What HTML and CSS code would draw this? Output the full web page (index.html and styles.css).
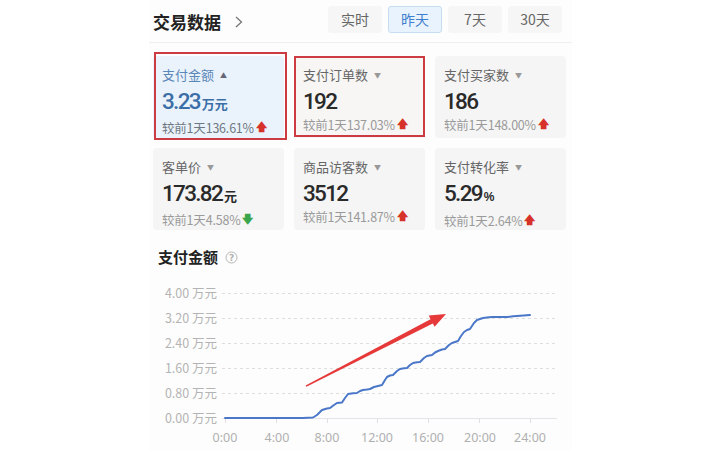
FILE: index.html
```html
<!DOCTYPE html>
<html lang="zh">
<head>
<meta charset="utf-8">
<link rel="stylesheet" href="styles.css">
</head>
<body>
<div class="panel">
  <div class="header">
    <div class="title">交易数据
      <svg class="chev" width="10" height="14" viewBox="0 0 10 14"><polyline points="2,2 7.5,7 2,12" fill="none" stroke="#777" stroke-width="1.3"/></svg>
    </div>
    <div class="tabs">
      <span class="tab">实时</span>
      <span class="tab active">昨天</span>
      <span class="tab">7天</span>
      <span class="tab">30天</span>
    </div>
  </div>

  <div class="grid">
    <div class="card sel">
      <div class="label">支付金额 <span class="caret">▲</span></div>
      <div class="value"><span class="num">3.23</span><span class="unit">万元</span></div>
      <div class="sub">较前1天136.61%<span class="up">🡅</span></div>
      <div class="mark mark1"></div>
    </div>
    <div class="card warm">
      <div class="label">支付订单数 <span class="caret">▼</span></div>
      <div class="value"><span class="num">192</span></div>
      <div class="sub">较前1天137.03%<span class="up">🡅</span></div>
      <div class="mark mark2"></div>
    </div>
    <div class="card">
      <div class="label">支付买家数 <span class="caret">▼</span></div>
      <div class="value"><span class="num">186</span></div>
      <div class="sub">较前1天148.00%<span class="up">🡅</span></div>
    </div>
    <div class="card">
      <div class="label">客单价 <span class="caret">▼</span></div>
      <div class="value"><span class="num">173.82</span><span class="unit">元</span></div>
      <div class="sub">较前1天4.58%<span class="down">🡇</span></div>
    </div>
    <div class="card">
      <div class="label">商品访客数 <span class="caret">▼</span></div>
      <div class="value"><span class="num">3512</span></div>
      <div class="sub">较前1天141.87%<span class="up">🡅</span></div>
    </div>
    <div class="card">
      <div class="label">支付转化率 <span class="caret">▼</span></div>
      <div class="value"><span class="num">5.29</span><span class="unit pct">%</span></div>
      <div class="sub">较前1天2.64%<span class="up">🡅</span></div>
    </div>
  </div>

  <div class="chart-title">支付金额
    <svg class="help" width="13" height="13" viewBox="0 0 13 13"><circle cx="6.5" cy="6.5" r="5.5" fill="none" stroke="#b5b5b5" stroke-width="1"/><text x="6.5" y="9.6" text-anchor="middle" class="qm">?</text></svg>
  </div>

  <svg class="chart" width="423" height="175" viewBox="0 0 423 175">
    <g class="grid-lines" stroke="#dedede" stroke-width="1" stroke-dasharray="3 3">
      <line x1="73" y1="18.5" x2="408" y2="18.5"/>
      <line x1="73" y1="43.5" x2="408" y2="43.5"/>
      <line x1="73" y1="68.5" x2="408" y2="68.5"/>
      <line x1="73" y1="93.5" x2="408" y2="93.5"/>
      <line x1="73" y1="118.5" x2="408" y2="118.5"/>
    </g>
    <line x1="73" y1="143.5" x2="408" y2="143.5" stroke="#e2e4ea" stroke-width="1"/>
    <g stroke="#e0e0e0" stroke-width="1">
      <line x1="76.5" y1="144" x2="76.5" y2="148"/>
      <line x1="127.5" y1="144" x2="127.5" y2="148"/>
      <line x1="178.5" y1="144" x2="178.5" y2="148"/>
      <line x1="228.5" y1="144" x2="228.5" y2="148"/>
      <line x1="279.5" y1="144" x2="279.5" y2="148"/>
      <line x1="330.5" y1="144" x2="330.5" y2="148"/>
      <line x1="381.5" y1="144" x2="381.5" y2="148"/>
    </g>
    <g class="ylab" text-anchor="end">
      <text x="68" y="22.5">4.00 万元</text>
      <text x="68" y="47.5">3.20 万元</text>
      <text x="68" y="72.5">2.40 万元</text>
      <text x="68" y="97.5">1.60 万元</text>
      <text x="68" y="122.5">0.80 万元</text>
      <text x="68" y="147.5">0.00 万元</text>
    </g>
    <g class="xlab" text-anchor="middle">
      <text x="76" y="166.5">0:00</text>
      <text x="128" y="166.5">4:00</text>
      <text x="178" y="166.5">8:00</text>
      <text x="228" y="166.5">12:00</text>
      <text x="279" y="166.5">16:00</text>
      <text x="331" y="166.5">20:00</text>
      <text x="381" y="166.5">24:00</text>
    </g>
    <polyline fill="none" stroke="#4b77c9" stroke-width="2" stroke-linejoin="round" stroke-linecap="round"
      points="76,143 154,143 164,142.5 168,140 173,135 178,133.5 181,133 185,130 188,128 193,127.5 196,123 199,119 204,118.3 208,118 211,116 214,115 218,114.5 221,114 225,112 229,111 233,110 236,105 238,102 241,100.5 244,100 248,96 251,94 255,93.3 258,93 261,90 264,88 268,87.3 271,87 275,83 278,81 283,80 286,77.5 289,76 293,74.5 296,74 300,70 303,68 309,66 312,61 315,57 318,55 321,54 325,48 328,45 334,43 340,42.3 344,42 358,42 364,41.3 368,41 381,40"/>
    <polygon fill="#e6393a" points="156.6,110.4 281.5,44.2 279.8,40.6 297,39 285.6,51.8 283.8,48.4 157.4,111.8"/>
  </svg>
</div>
</body>
</html>
```

FILE: styles.css
```css
* { box-sizing: border-box; }
html, body { margin: 0; padding: 0; }
body {
  background: #ffffff;
  width: 720px;
  height: 450px;
  overflow: hidden;
  font-family: "Noto Sans CJK SC", "Noto Sans", sans-serif;
  color: #222;
}
.panel {
  margin-left: 149px;
  width: 423px;
  height: 450px;
  background: #fdfdfd;
}
.header {
  height: 43px;
  display: flex;
  align-items: center;
  justify-content: space-between;
  padding: 0 10px 0 4px;
  border-bottom: 1px solid #f0f0f0;
}
.title {
  font-size: 17px;
  font-weight: 700;
  color: #222;
  display: flex;
  align-items: center;
  line-height: 22px;
  margin-top: 1px;
}
.chev { margin-left: 13px; }
.tabs {
  display: flex;
  gap: 6px;
  margin-top: -4px;
}
.tab {
  width: 54px;
  height: 27px;
  display: flex;
  align-items: center;
  justify-content: center;
  font-size: 14px;
  color: #666;
  background: #f6f6f6;
  border: 1px solid #f6f6f6;
  border-radius: 3px;
}
.tab.active {
  background: #e9f3fd;
  border-color: #c6dcf1;
  color: #3f7fcf;
}
.grid {
  margin: 13px 0 0 4px;
  display: grid;
  grid-template-columns: 131px 131px 131px;
  grid-auto-rows: 82px;
  gap: 10px;
}
.card {
  position: relative;
  background: #f5f5f5;
  border-radius: 4px;
  padding: 10px 9px 0 9px;
}
.card.warm { background: #f7f6f4; }
.card.sel { background: #eaf3fc; }
.label {
  font-size: 13px;
  line-height: 18px;
  color: #666;
  display: flex;
  align-items: center;
}
.caret {
  font-size: 7px;
  color: #999;
  margin-left: 6px;
  line-height: 18px;
}
.sel .label { color: #5a86b8; }
.sel .caret { color: #667; }
.value {
  margin-top: 4px;
  line-height: 26px;
  color: #2a2a2a;
  display: flex;
  align-items: baseline;
}
.num {
  font-family: "Roboto", "Liberation Sans", sans-serif;
  font-size: 22.5px;
  font-weight: 500;
  letter-spacing: -1.7px;
}
.sel .value { color: #3b6ea6; }
.unit {
  font-family: "Noto Sans CJK SC", sans-serif;
  font-size: 13px;
  font-weight: 700;
  margin-left: 2px;
}
.unit.pct { font-family: "Liberation Sans", sans-serif; font-size: 12px; }
.sub {
  margin-top: 2px;
  font-size: 12.5px;
  line-height: 18px;
  color: #9a9a9a;
  white-space: nowrap;
  display: flex;
  align-items: center;
  letter-spacing: -0.2px;
}
.sel .sub { color: #6f7780; }
.up, .down {
  font-family: "DejaVu Sans", sans-serif;
  font-size: 11px;
  margin-left: 2px;
  font-weight: 700;
}
.up { color: #d6322a; }
.down { color: #3aa54a; }
.mark {
  position: absolute;
  border: 2px solid #cc3a42;
  pointer-events: none;
}
.mark1 { left: 1px; top: -4px; width: 133px; height: 88px; }
.mark2 { left: 0; top: 0; width: 131px; height: 81px; }
.chart-title {
  margin: 16px 0 0 9px;
  font-size: 15px;
  font-weight: 700;
  line-height: 22px;
  color: #222;
  display: flex;
  align-items: center;
}
.help { margin-left: 7px; }
.qm { font-family: "DejaVu Sans", sans-serif; font-size: 9px; fill: #b0b0b0; }
.chart { display: block; margin-top: 7px; }
.ylab text {
  font-family: "Noto Sans CJK SC", sans-serif;
  font-size: 12.5px;
  fill: #b4b4b4;
}
.xlab text {
  font-family: "Noto Sans", sans-serif;
  font-size: 12.5px;
  fill: #b0b0b0;
}
```
